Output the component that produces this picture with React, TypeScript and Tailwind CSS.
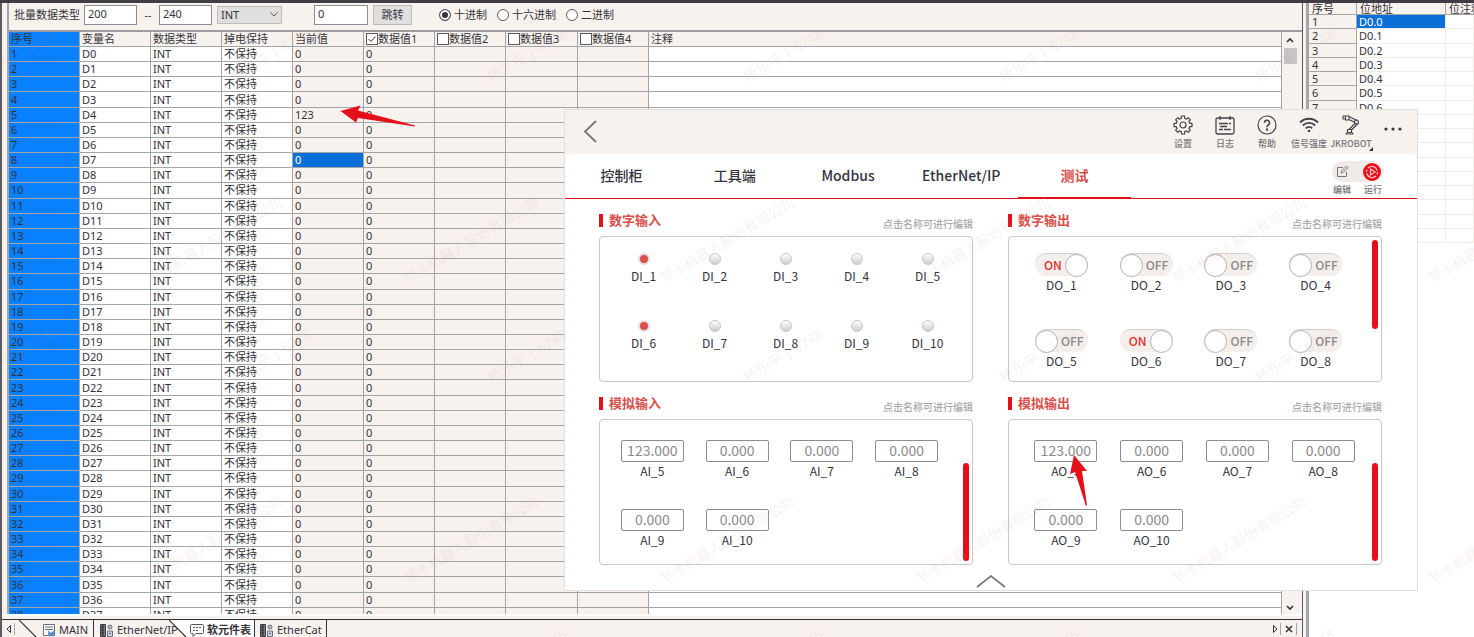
import React, { useState } from 'react';

const rows = Array.from({ length: 38 }, (_, i) => i);
const bits = Array.from({ length: 16 }, (_, i) => i);

const dataColumns = [
  { label: '数据值1', checked: true },
  { label: '数据值2', checked: false },
  { label: '数据值3', checked: false },
  { label: '数据值4', checked: false },
];

const digitalInputs = [
  { name: 'DI_1', on: true },
  { name: 'DI_2', on: false },
  { name: 'DI_3', on: false },
  { name: 'DI_4', on: false },
  { name: 'DI_5', on: false },
  { name: 'DI_6', on: true },
  { name: 'DI_7', on: false },
  { name: 'DI_8', on: false },
  { name: 'DI_9', on: false },
  { name: 'DI_10', on: false },
];

const digitalOutputs = [
  { name: 'DO_1', on: true },
  { name: 'DO_2', on: false },
  { name: 'DO_3', on: false },
  { name: 'DO_4', on: false },
  { name: 'DO_5', on: false },
  { name: 'DO_6', on: true },
  { name: 'DO_7', on: false },
  { name: 'DO_8', on: false },
];

const analogInputs = [
  { name: 'AI_5', value: '123.000' },
  { name: 'AI_6', value: '0.000' },
  { name: 'AI_7', value: '0.000' },
  { name: 'AI_8', value: '0.000' },
  { name: 'AI_9', value: '0.000' },
  { name: 'AI_10', value: '0.000' },
];

const analogOutputs = [
  { name: 'AO_5', value: '123.000' },
  { name: 'AO_6', value: '0.000' },
  { name: 'AO_7', value: '0.000' },
  { name: 'AO_8', value: '0.000' },
  { name: 'AO_9', value: '0.000' },
  { name: 'AO_10', value: '0.000' },
];

/* ---------- icons ---------- */

const GearIcon = () => (
  <svg width="20" height="20" viewBox="0 0 20 20" fill="none" stroke="currentColor" strokeWidth="1.2" strokeLinejoin="round">
    <path d="M16.8 8.4H19v3.2h-2.2l-.9 2.1 1.5 1.5-2.2 2.2-1.5-1.5-2.1.9V19H8.4v-2.2l-2.1-.9-1.5 1.5-2.2-2.2 1.5-1.5-.9-2.1H1V8.4h2.2l.9-2.1-1.5-1.5 2.2-2.2 1.5 1.5 2.1-.9V1h3.2v2.2l2.1.9 1.5-1.5 2.2 2.2-1.5 1.5z" />
    <circle cx="10" cy="10" r="3" />
  </svg>
);

const LogIcon = () => (
  <svg width="20" height="20" viewBox="0 0 20 20" fill="none" stroke="currentColor" strokeWidth="1.3">
    <rect x="1" y="3" width="18" height="16" rx="1.5" />
    <path d="M5 1v4M15 1v4M4 8.5h9M14 8.5h2M5 11.5h7M4 14.5h4M9 14.5h7" />
  </svg>
);

const HelpIcon = () => (
  <svg width="20" height="20" viewBox="0 0 20 20" fill="none" stroke="currentColor" strokeWidth="1.2">
    <circle cx="10" cy="10" r="9" />
    <path d="M7.5 7.8a2.5 2.5 0 1 1 3.7 2.2c-.9.5-1.2 1-1.2 2.2" strokeWidth="1.5" />
    <circle cx="10" cy="14.5" r=".6" fill="currentColor" />
  </svg>
);

const WifiIcon = () => (
  <svg width="20" height="20" viewBox="0 0 20 20" fill="none" stroke="currentColor" strokeWidth="1.8">
    <path d="M1 7.5c5-5 13-5 18 0M3.8 10.5c3.5-3.5 8.9-3.5 12.4 0M6.7 13.4c2-1.9 4.6-1.9 6.6 0" />
    <circle cx="10" cy="16" r="1.3" fill="currentColor" stroke="none" />
  </svg>
);

const RobotIcon = () => (
  <svg width="20" height="20" viewBox="0 0 20 20" fill="none" stroke="currentColor" strokeWidth="1.1" strokeLinejoin="round">
    <path d="M2 1h2.5v3H2zM4.5 1H8v4H4.5zM8 1.5l8 4M8 4.5l6 3" />
    <circle cx="15.5" cy="7" r="2" />
    <path d="M14 8.5l-6 6M17 8.5L10.5 15" />
    <path d="M6.500 14.5h4v3h-4zM5 19l1-1.5h5l1 1.5z" />
  </svg>
);

const PlcIcon = () => (
  <svg className="shrink-0" width="14" height="14" viewBox="0 0 14 14" fill="none" stroke="#3c3c46">
    <path d="M.5 1.5h5v12h-5z" fill="#77787f" />
    <path d="M3 1.5v12M1 4h2M1 7h2M1 10h2" stroke="#26262e" />
    <circle cx="10" cy="4" r="2" fill="#b7bcc4" stroke="#6c7078" />
    <path d="M7.5 8h5v5.5h-5z" fill="#d8d8dc" stroke="#6c7078" />
    <path d="M9 10.5h2" stroke="#2c7bd0" strokeWidth="1.5" />
  </svg>
);

/* ---------- register table ---------- */

const Radio = ({ label, checked }: { label: string; checked?: boolean }) => (
  <label className="flex items-center">
    <input
      type="radio"
      name="radix"
      defaultChecked={checked}
      className="mr-[3px] h-3 w-3 appearance-none rounded-full border border-[#5c5a62] bg-white checked:bg-[#35323b] checked:shadow-[inset_0_0_0_2px_white]"
    />
    {label}
  </label>
);

const Toolbar = () => (
  <div className="flex h-[29px] items-center whitespace-nowrap border-b-2 border-[#9a9ca0] pb-[3px] pl-[5px]">
    <label htmlFor="from" className="w-[70px]">批量数据类型</label>
    <input id="from" defaultValue="200" className="h-5 w-[53px] border border-[#8b8d92] bg-white px-[3px] pb-1" />
    <span className="w-[22px] text-center">--</span>
    <input aria-label="结束" defaultValue="240" className="h-5 w-[53px] border border-[#8b8d92] bg-white px-[3px] pb-1" />
    <div className="relative ml-[5px]">
      <select aria-label="数据类型" className="block h-[18px] w-[65px] appearance-none border border-[#bdbcbc] bg-[#e0dfde] px-[3px]">
        <option>INT</option>
      </select>
      <svg className="pointer-events-none absolute right-1 top-[6px]" width="8" height="6" viewBox="0 0 8 6" fill="none" stroke="#55555c">
        <path d="M.5.5L4 4 7.5.5" />
      </svg>
    </div>
    <input aria-label="地址" defaultValue="0" className="ml-8 h-5 w-[54px] border border-[#8b8d92] bg-white px-[3px] pb-1" />
    <button className="ml-[5px] h-5 w-[39px] border border-[#bdbcbc] bg-[#e0dfde]">跳转</button>
    <div className="ml-[27px] flex gap-[10px]">
      <Radio label="十进制" checked />
      <Radio label="十六进制" />
      <Radio label="二进制" />
    </div>
  </div>
);

const RegisterTable = () => {
  const cell = 'overflow-hidden border-b border-r border-[#a3a5a9] p-0 pl-[2px] text-left font-normal';
  return (
    <table className="h-[591px] w-full table-fixed border-separate border-spacing-0 whitespace-nowrap leading-[14px]">
      <colgroup>
        <col className="w-[71px]" />
        <col className="w-[71px]" />
        <col className="w-[71px]" />
        <col className="w-[71px]" />
        <col className="w-[71px]" />
        <col className="w-[71px]" />
        <col className="w-[71px]" />
        <col className="w-[72px]" />
        <col className="w-[71px]" />
        <col />
      </colgroup>
      <thead>
        <tr>
          <th className={cell + ' bg-[#0880ff]'}>序号</th>
          <th className={cell}>变量名</th>
          <th className={cell}>数据类型</th>
          <th className={cell}>掉电保持</th>
          <th className={cell}>当前值</th>
          {dataColumns.map((c) => (
            <th key={c.label} className={cell}>
              <label className="flex items-center">
                <span className="relative h-3 w-3">
                  <input type="checkbox" defaultChecked={c.checked} className="block h-3 w-3 appearance-none border border-[#5c5a62] bg-white" />
                  {c.checked && (
                    <svg className="absolute left-0 top-0" width="12" height="12" viewBox="0 0 12 12" fill="none" stroke="#35323b">
                      <path d="M2.5 6L5 8.500l4.500-5" />
                    </svg>
                  )}
                </span>
                {c.label}
              </label>
            </th>
          ))}
          <th className={cell}>注释</th>
        </tr>
      </thead>
      <tbody>
        {rows.map((i) => (
          <tr key={i}>
            <td className={cell + ' bg-[#0880ff]'}>{i + 1}</td>
            <td className={cell + ' bg-white'}>D{i}</td>
            <td className={cell + ' bg-white'}>INT</td>
            <td className={cell + ' bg-white'}>不保持</td>
            <td className={cell + (i === 7 ? ' bg-[#0b6fd8] text-white' : '')}>{i === 4 ? '123' : '0'}</td>
            <td className={cell}>0</td>
            <td className={cell}></td>
            <td className={cell}></td>
            <td className={cell}></td>
            <td className={cell + ' bg-white'}></td>
          </tr>
        ))}
      </tbody>
    </table>
  );
};

const ScrollBar = () => (
  <div className="flex w-4 flex-col items-center justify-between">
    <div className="flex flex-col items-center">
      <svg className="mt-1 mb-1" width="8" height="8" viewBox="0 0 8 8" fill="none" stroke="#35323b" strokeWidth="1.6">
        <path d="M1 6l3-3 3 3" />
      </svg>
      <div className="h-4 w-[13px] bg-[#c6c4c4]" />
    </div>
    <svg className="mb-[2px]" width="8" height="8" viewBox="0 0 8 8" fill="none" stroke="#35323b" strokeWidth="1.6">
      <path d="M1 2l3 3 3-3" />
    </svg>
  </div>
);

const SheetTabs = () => (
  <div className="flex h-[18px] shrink-0 items-center whitespace-nowrap border-t border-[#35323b] leading-4">
    <svg className="ml-1" width="9" height="12" viewBox="0 0 9 12" fill="none" stroke="#35323b">
      <path d="M4.5 2.5v7L1 6z" />
      <path d="M8.5 0v12" stroke="#a3a5a9" />
    </svg>
    <svg className="ml-1" width="18" height="17" viewBox="0 0 18 17" stroke="#35323b" strokeWidth="1.2">
      <path d="M0 0l17 17" />
    </svg>
    <button className="flex h-full w-[57px] items-center gap-[3px] border-r border-[#35323b] pl-[5px] pt-[2px]">
      <svg className="shrink-0" width="14" height="14" viewBox="0 0 14 14" fill="none">
        <path d="M1.5 1.5h11v11h-11z" fill="white" stroke="#6c7078" />
        <path d="M3 4h8M3 6.5h8" stroke="#6c7078" />
        <path d="M7 13V9l2 2.5L11 9v4" stroke="#2c7bd0" strokeWidth="1.3" />
      </svg>
      MAIN
    </button>
    <button className="flex h-full w-[75px] items-center gap-[3px] pl-[6px] pt-[2px]">
      <PlcIcon />
      EtherNet/IP
    </button>
    <svg className="shrink-0" width="18" height="17" viewBox="0 0 18 17">
      <path d="M0 0h18v17h-1z" fill="white" />
      <path d="M0 0l17 17" stroke="#35323b" strokeWidth="1.2" />
    </svg>
    <button className="flex h-full w-[68px] items-center gap-[3px] border-r border-[#35323b] bg-white pl-[3px] pt-[2px] font-bold">
      <svg className="shrink-0" width="14" height="14" viewBox="0 0 14 14" fill="white" stroke="#55555c">
        <path d="M1.5 1.5h11a1 1 0 0 1 1 1v7a1 1 0 0 1-1 1H6l-3 3v-3H1.5a1 1 0 0 1-1-1v-7a1 1 0 0 1 1-1z" />
        <path d="M3 4.5h8M3 7.5h6" strokeDasharray="2 1" />
      </svg>
      软元件表
    </button>
    <button className="flex h-full w-[72px] items-center gap-[3px] border-r border-[#35323b] pl-[5px] pt-[2px]">
      <PlcIcon />
      EtherCat
    </button>
    <svg className="ml-auto mr-[5px]" width="26" height="12" viewBox="0 0 26 12" fill="none" stroke="#35323b">
      <path d="M2.5 2.5v7L6 6z" />
      <path d="M9.5 0v12M25.5 0v12" stroke="#a3a5a9" />
      <path d="M15 3l6 6M21 3l-6 6" strokeWidth="1.6" />
    </svg>
  </div>
);

const BitTable = () => {
  const head = 'overflow-hidden border-b border-r border-[#a3a5a9] p-0 pl-[3px] text-left font-normal';
  const cell = 'overflow-hidden border-b border-r border-[#f3ebe5] p-0 pl-[2px]';
  return (
    <table className="h-[240px] w-full table-fixed border-separate border-spacing-0 whitespace-nowrap leading-[13px]">
      <colgroup>
        <col className="w-12" />
        <col className="w-[89px]" />
        <col />
      </colgroup>
      <thead className="bg-[#f7f2ee]">
        <tr className="h-[12px] leading-[11px]">
          <th className={head}>序号</th>
          <th className={head}>位地址</th>
          <th className={head}>位注释</th>
        </tr>
      </thead>
      <tbody>
        {bits.map((i) => (
          <tr key={i}>
            <th className={head + ' bg-[#f7f2ee]'}>{i + 1}</th>
            <td className={cell + (i === 0 ? ' bg-[#0b6fd8] text-white' : '')}>D0.{i}</td>
            <td className={cell}></td>
          </tr>
        ))}
      </tbody>
    </table>
  );
};

/* ---------- robot IO window ---------- */

const HeaderItem = ({ label, children }: { label: string; children: React.ReactNode }) => (
  <button className="flex w-[42px] flex-col items-center gap-[3px] text-[9px] font-medium leading-3 text-[#77757b]">
    <span className="text-[#45424b]">{children}</span>
    {label}
  </button>
);

const Panel = ({ title, children }: { title: string; children: React.ReactNode }) => (
  <section className="min-w-0 flex-1">
    <div className="flex h-[23px] items-start justify-between">
      <h2 className="flex items-center gap-[6px] text-[13px] font-bold leading-[14px] text-[#d6504c]">
        <span className="h-[13px] w-1 bg-[#e50f1b]" />
        {title}
      </h2>
      <span className="pt-[5px] text-[10px] font-medium leading-3 text-[#aaa8ab]">点击名称可进行编辑</span>
    </div>
    <div className="flex h-[146px] rounded border border-[#c9c6c5] pr-[3px]">{children}</div>
  </section>
);

const Analog = ({ items }: { items: { name: string; value: string }[] }) => (
  <>
    {items.map((io) => (
      <label key={io.name} className="flex flex-col items-center gap-px">
        <input
          defaultValue={io.value}
          className="h-[22px] w-[63px] rounded-xs border border-[#8b8d92] bg-white pb-[3px] text-center text-[14px] text-[#8b898d]"
        />
        {io.name}
      </label>
    ))}
  </>
);

const IoWindow = () => {
  const [tab, setTab] = useState('测试');
  return (
    <div className="absolute left-[564px] top-[109px] w-[854px] border border-[#e4dfdb] bg-white font-['Noto_Sans_CJK_SC',sans-serif] text-[#35323b]">
      <header className="flex h-11 items-start justify-between bg-[#f7f2ee] pt-[5px] pl-[18px] pr-[3px]">
        <button aria-label="返回" className="mt-[5px]">
          <svg width="15" height="23" viewBox="0 0 15 23" fill="none" stroke="#77757b" strokeWidth="1.8">
            <path d="M13 1L2 11.5 13 22" />
          </svg>
        </button>
        <div className="flex">
          <HeaderItem label="设置"><GearIcon /></HeaderItem>
          <HeaderItem label="日志"><LogIcon /></HeaderItem>
          <HeaderItem label="帮助"><HelpIcon /></HeaderItem>
          <HeaderItem label="信号强度"><WifiIcon /></HeaderItem>
          <div className="relative">
            <HeaderItem label="JKROBOT"><RobotIcon /></HeaderItem>
            <svg className="absolute -right-[1px] -bottom-[1px]" width="4" height="4" viewBox="0 0 4 4">
              <path d="M4 0v4H0z" fill="#35323b" />
            </svg>
          </div>
          <button aria-label="更多" className="flex h-[27px] w-[42px] items-center justify-center">
            <svg width="18" height="4" viewBox="0 0 18 4" fill="#35323b">
              <circle cx="2" cy="2" r="1.6" />
              <circle cx="9" cy="2" r="1.6" />
              <circle cx="16" cy="2" r="1.6" />
            </svg>
          </button>
        </div>
      </header>

      <div className="flex h-[45px] border-b border-[#e50f1b]">
        <nav className="flex w-[566px]">
          {['控制柜', '工具端', 'Modbus', 'EtherNet/IP', '测试'].map((t) => (
            <button
              key={t}
              onClick={() => setTab(t)}
              className={
                t === tab
                  ? 'flex-1 border-b border-[#e50f1b] text-[14px] font-bold text-[#d6504c]'
                  : 'flex-1 border-b border-transparent text-[14px] font-medium'
              }
            >
              {t}
            </button>
          ))}
        </nav>
        <div className="ml-auto mr-[34px] flex flex-col items-center pt-[7px] text-[9px] font-medium leading-3 text-[#77757b]">
          <div className="flex h-[21px] w-[51px] items-center justify-between rounded-full bg-[#f1ebe8] pl-1 pr-[2px]">
            <button aria-label="编辑">
              <svg width="13" height="13" viewBox="0 0 13 13" fill="none" stroke="#77757b">
                <path d="M7 2.5H1.5v9h9V7M5 8l1-2.5L10.5 1 12 2.5 7.5 7z" />
              </svg>
            </button>
            <button aria-label="运行">
              <svg width="18" height="18" viewBox="0 0 18 18" fill="none" stroke="#f7c4c4" strokeWidth="1.2">
                <circle cx="9" cy="9" r="9" fill="#e50f1b" stroke="none" />
                <path d="M5 5a5.5 5.5 0 0 1 9.2 2.5M13 13a5.5 5.5 0 0 1-9.2-2.5M3.5 9a5.5 5.5 0 0 1 .5-2.500M14.500 9a5.500 5.500 0 0 1-.5 2.500M7.500 6l4.500 3-4.500 3z" />
              </svg>
            </button>
          </div>
          <div className="flex gap-[13px] pt-[2px]">
            <span>编辑</span>
            <span>运行</span>
          </div>
        </div>
      </div>

      <div className="flex flex-col gap-[14px] pt-[14px] pl-[34px] pr-[35px] text-[12px] leading-[16px]">
        <div className="flex gap-[35px]">
          <Panel title="数字输入">
            <div className="grid flex-1 grid-cols-5 content-start gap-y-9 pt-4 pl-2 pr-[6px]">
              {digitalInputs.map((io) => (
                <div key={io.name} className="flex flex-col items-center gap-[3px]">
                  {io.on ? (
                    <span className="h-3 w-3 rounded-full border-2 border-[#e3dcda] bg-[#d8504d]" />
                  ) : (
                    <span className="h-3 w-3 rounded-full border border-[#c9c6c5] bg-linear-to-b from-white to-[#cfcccb]" />
                  )}
                  {io.name}
                </div>
              ))}
            </div>
          </Panel>
          <Panel title="数字输出">
            <div className="grid flex-1 grid-cols-4 content-start gap-y-9 pt-4 pl-[10px] pr-[14px]">
              {digitalOutputs.map((io) => (
                <div key={io.name} className="flex flex-col items-center gap-px">
                  {io.on ? (
                    <button aria-label={io.name} className="flex h-[23px] w-[53px] items-center justify-end rounded-full border-t border-[#d2cecc] bg-[#f5efec] font-medium text-[#e0302f]">
                      ON
                      <span className="ml-[3px] h-[23px] w-[23px] rounded-full border border-[#b3b1b3] bg-white" />
                    </button>
                  ) : (
                    <button aria-label={io.name} className="flex h-[23px] w-[53px] items-center rounded-full border-t border-[#d2cecc] bg-[#f5efec] font-medium text-[#8b898d]">
                      <span className="mr-[3px] h-[23px] w-[23px] rounded-full border border-[#b3b1b3] bg-white" />
                      OFF
                    </button>
                  )}
                  {io.name}
                </div>
              ))}
            </div>
            <div className="mt-[3px] h-[89px] w-[6px] rounded-full bg-[#e50f1b]" />
          </Panel>
        </div>
        <div className="flex gap-[35px]">
          <Panel title="模拟输入">
            <div className="grid flex-1 grid-cols-4 content-start gap-y-[30px] pt-5 pl-[10px] pr-[14px]">
              <Analog items={analogInputs} />
            </div>
            <div className="mt-[43px] h-[98px] w-[6px] rounded-full bg-[#e50f1b]" />
          </Panel>
          <Panel title="模拟输出">
            <div className="grid flex-1 grid-cols-4 content-start gap-y-[30px] pt-5 pl-[14px] pr-[6px]">
              <Analog items={analogOutputs} />
            </div>
            <div className="mt-[43px] h-[98px] w-[6px] rounded-full bg-[#e50f1b]" />
          </Panel>
        </div>
      </div>

      <button aria-label="展开" className="mx-auto mt-[10px] mb-[2px] block">
        <svg width="30" height="13" viewBox="0 0 30 13" fill="none" stroke="#77757b" strokeWidth="1.6">
          <path d="M1 12L15 1l14 11" />
        </svg>
      </button>
    </div>
  );
};

/* user watermark tiled over the whole desktop */
const marks = [0, 1, 2, 3, 4, 5].flatMap((c) =>
  [0, 1, 2].flatMap((r) => [
    { text: '杨乐平 | 6748', x: 15 + c * 256, y: 55 + r * 300 },
    { text: '节卡机器人股份有限公司', x: 215 + c * 256, y: 240 + r * 300 },
  ])
);

const Watermark = () => (
  <div aria-hidden="true" className="pointer-events-none absolute inset-0 overflow-hidden">
    {marks.map((m, i) => (
      <span
        key={i}
        className="absolute -translate-x-1/2 -translate-y-1/2 -rotate-[31deg] whitespace-nowrap text-[14px] text-[#c09a84]/15"
        style={{ left: m.x, top: m.y }}
      >
        {m.text}
      </span>
    ))}
  </div>
);

const App = () => {
  return (
    <div className="relative flex h-screen flex-col overflow-hidden bg-[#f7f2ee] font-['Noto_Sans','Noto_Sans_CJK_SC',sans-serif] text-[11px] text-[#35323b]">
      <div className="h-[3px] shrink-0 bg-[#413d46]" />
      <div className="flex min-h-0 flex-1">
        <main className="flex min-w-0 flex-1 flex-col border-l-2 border-r border-[#5c5a62]">
          <div className="ml-[5px] flex min-h-0 flex-1 flex-col border-l-2 border-[#a3a5a9]">
            <Toolbar />
            <div className="mr-1 flex min-h-0 flex-1">
              <div className="min-w-0 flex-1 overflow-hidden">
                <RegisterTable />
              </div>
              <ScrollBar />
            </div>
          </div>
          <div className="mb-[3px] h-[2px] bg-white" />
          <SheetTabs />
        </main>
        <aside className="ml-[3px] w-[168px] shrink-0 overflow-hidden border-l-3 border-[#a3a5a9] bg-white">
          <BitTable />
        </aside>
      </div>

      <IoWindow />

      <svg className="absolute left-[340px] top-[105px]" width="76" height="23" viewBox="0 0 76 23" fill="#e50f1b">
        <path d="M.5 6L20.500.5l-2.500 5L75 20.500v1L18 13l-2 4.500z" />
      </svg>
      <svg className="absolute left-[1069px] top-[455px]" width="19" height="52" viewBox="0 0 19 52" fill="#e50f1b">
        <path d="M5 0l13 16h-5l5 34-1 1L6 17l-5 2z" />
      </svg>
      <Watermark />
    </div>
  );
};

export default App;
